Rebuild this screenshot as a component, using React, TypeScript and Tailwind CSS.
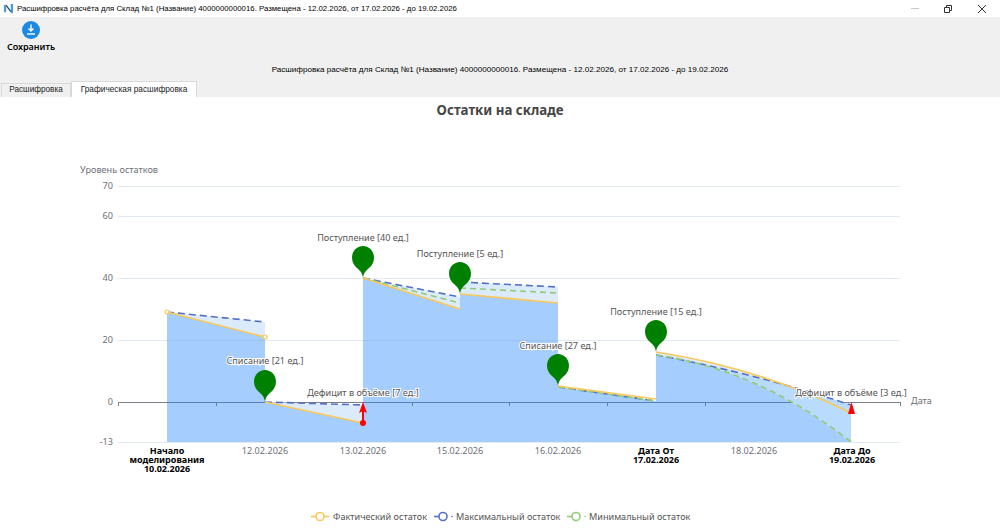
import React from 'react';

const TITLE = 'Расшифровка расчёта для Склад №1 (Название) 4000000000016. Размещена - 12.02.2026, от 17.02.2026 - до 19.02.2026';

const ORANGE = '#fac858';
const BLUE = '#5470c6';
const GREEN = '#91cc75';
const LIGHT = '#dcebfc';

const gridLines = [
  { y: 186, label: '70' },
  { y: 216, label: '60' },
  { y: 278, label: '40' },
  { y: 340, label: '20' },
  { y: 402, label: '0' },
  { y: 442, label: '-13' }
];

const ticks = [118, 216, 314, 412, 509, 607, 705, 803, 900];

const plainDates = [
  { x: 265, label: '12.02.2026' },
  { x: 363, label: '13.02.2026' },
  { x: 460, label: '15.02.2026' },
  { x: 558, label: '16.02.2026' },
  { x: 754, label: '18.02.2026' }
];

const boldDates = [
  { x: 167, lines: ['Начало', 'моделирования', '10.02.2026'] },
  { x: 656, lines: ['Дата От', '17.02.2026'] },
  { x: 852, lines: ['Дата До', '19.02.2026'] }
];

const darkAreas = [
  'M167,312 L265,337 L265,442 L167,442 Z',
  'M265,402 L363,423 L363,442 L265,442 Z',
  'M363,278 L460,309 L460,442 L363,442 Z',
  'M460,294 L558,303 L558,442 L460,442 Z',
  'M558,387 L656,401 L656,442 L558,442 Z',
  'M656,355 Q760,370 851,442 L656,442 Z'
];

const lightAreas = [
  'M167,312 L265,322 L265,337 Z',
  'M265,402 L363,405 L363,423 Z',
  'M363,278 L460,297 L460,309 Z',
  'M460,282 L558,287 L558,303 L460,294 Z',
  'M656,352 Q760,368 851,413 L851,405 Q750,372 656,355 Z'
];

const lines = [
  { color: BLUE, dash: '7 4', d: 'M167,312 L265,322 M265,402 L363,405 M363,278 L460,297 M460,282 L558,287 M558,387 L656,401 M656,355 Q750,372 851,405' },
  { color: GREEN, dash: '6 4', d: 'M363,278 L460,303 M460,288 L558,293 M558,387 L656,401 M656,355 Q760,370 851,442' },
  { color: ORANGE, dash: undefined, d: 'M167,312 L265,337 M265,402 L363,423 M363,278 L460,309 M460,294 L558,303 M558,386 L656,399 M656,352 Q760,368 851,413' }
];

const pins = [
  { x: 265, y: 402 },
  { x: 363, y: 278 },
  { x: 460, y: 294 },
  { x: 558, y: 386 },
  { x: 656, y: 352 }
];

const pinLabels = [
  { x: 363, y: 241, label: 'Поступление [40 ед.]' },
  { x: 460, y: 257, label: 'Поступление [5 ед.]' },
  { x: 265, y: 364, label: 'Списание [21 ед.]' },
  { x: 558, y: 349, label: 'Списание [27 ед.]' },
  { x: 656, y: 315, label: 'Поступление [15 ед.]' },
  { x: 363, y: 396, label: 'Дефицит в объёме [7 ед.]' },
  { x: 851, y: 396, label: 'Дефицит в объёме [3 ед.]' }
];

const legend = [
  { x: 320, color: ORANGE, textX: 333, label: 'Фактический остаток', solid: true },
  { x: 443, color: BLUE, textX: 456, label: 'Максимальный остаток', solid: false },
  { x: 576, color: GREEN, textX: 589, label: 'Минимальный остаток', solid: false }
];

const Pin = ({ x, y }: { x: number; y: number }) => (
  <path
    transform={`translate(${x} ${y})`}
    fill="#008000"
    d="M0,0 C-0.6,-5 -3,-7.5 -6,-10 C-9,-12.5 -11,-16 -11,-20.5 C-11,-27 -6,-32 0,-32 C6,-32 11,-27 11,-20.5 C11,-16 9,-12.5 6,-10 C3,-7.5 0.6,-5 0,0 Z"
  />
);

const Chart = () => (
  <svg viewBox="0 97 1000 435" className="block h-[435px] w-[1000px]">
    <text x="500" y="115" textAnchor="middle" className="fill-[#464646] text-[13.3px] font-bold">Остатки на складе</text>
    <text x="80" y="173" className="fill-[#6e7079] text-[9.1px]">Уровень остатков</text>

    {gridLines.map(g => (
      <text key={g.label} x="113" y={g.y + 3} textAnchor="end" className="fill-[#6e7079] text-[9.1px]">{g.label}</text>
    ))}

    {/* axis goes under the areas so it picks up their tint */}
    <line x1="118" x2="900" y1="402.5" y2="402.5" stroke="#7d8088" />
    {ticks.map(x => (
      <line key={x} x1={x + 0.5} x2={x + 0.5} y1="402" y2="406" stroke="#7d8088" />
    ))}

    {darkAreas.map(d => (
      <path key={d} d={d} fill="#1e82fa" fillOpacity="0.4" />
    ))}
    {lightAreas.map(d => (
      <path key={d} d={d} fill={LIGHT} />
    ))}
    <path d="M656,355 Q750,372 851,405 L851,442 Q760,370 656,355 Z" fill="#b9dbfd" />

    {gridLines.filter(g => g.label !== '0').map(g => (
      <line key={g.y} x1="118" x2="900" y1={g.y + 0.5} y2={g.y + 0.5} stroke="#6e8fc8" strokeOpacity="0.2" />
    ))}

    {lines.map(l => (
      <path key={l.color} d={l.d} fill="none" stroke={l.color} strokeWidth="1.6" strokeDasharray={l.dash} />
    ))}
    <circle cx="167" cy="312" r="2" fill="#fff" stroke={ORANGE} strokeWidth="1.2" />
    <circle cx="265" cy="337" r="2" fill="#fff" stroke={ORANGE} strokeWidth="1.2" />

    {pins.map(p => (
      <Pin key={p.x} x={p.x} y={p.y} />
    ))}

    {/* deficit arrows */}
    <line x1="363" x2="363" y1="423" y2="408" stroke="#f00" strokeWidth="2" />
    <path d="M363,402 L367,413 L363,411 L359,413 Z" fill="#f00" />
    <circle cx="363" cy="423" r="3" fill="#f00" />
    <path d="M851.5,402 L855,414 L848,414 Z" fill="#f00" />

    {pinLabels.map(l => (
      <text
        key={l.label}
        x={l.x}
        y={l.y}
        textAnchor="middle"
        stroke="#fff"
        strokeWidth="2"
        paintOrder="stroke"
        className="fill-[#555] text-[9.1px]"
      >
        {l.label}
      </text>
    ))}

    {plainDates.map(d => (
      <text key={d.x} x={d.x} y="454" textAnchor="middle" className="fill-[#6e7079] text-[9.1px]">{d.label}</text>
    ))}
    {boldDates.map(d => (
      <text key={d.x} textAnchor="middle" className="fill-black text-[9px] font-bold">
        {d.lines.map((t, i) => (
          <tspan key={t} x={d.x} y={454 + i * 9}>{t}</tspan>
        ))}
      </text>
    ))}
    <text x="911" y="404" className="fill-[#6e7079] text-[9.1px]">Дата</text>

    {legend.map(l => (
      <g key={l.label}>
        <line x1={l.x - 9} x2={l.solid ? l.x + 9 : l.x} y1="516.5" y2="516.5" stroke={l.color} strokeWidth="1.6" />
        {!l.solid && <circle cx={l.x + 9} cy="516.5" r="0.8" fill={l.color} />}
        <circle cx={l.x} cy="516.5" r="4" fill="#fff" stroke={l.color} strokeWidth="1.6" />
        <text x={l.textX} y="520" className="fill-[#555] text-[9.1px]">{l.label}</text>
      </g>
    ))}
  </svg>
);

const TitleBar = () => (
  <div className="flex h-[17px] items-center bg-white pl-[3px]">
    <svg viewBox="0 0 12 12" className="h-[11px] w-[11px]">
      <path d="M1 2h2.5v8H1z" fill="#4a9bd8" />
      <path d="M8.5 1h2.5v10H8.5z" fill="#4a9bd8" />
      <path d="M3.5 2.5l5 7" stroke="#27496f" strokeWidth="1.4" fill="none" />
    </svg>
    <span className="ml-[3px] whitespace-nowrap font-['Liberation_Sans',sans-serif] text-[7.8px] text-black">{TITLE}</span>
    <div className="ml-auto flex items-center">
      <svg viewBox="0 0 8 8" className="mr-[25px] h-[8px] w-[8px]">
        <path d="M0 3.5h8" stroke="#c8c8c8" />
      </svg>
      <svg viewBox="0 0 8 8" className="mr-[26px] h-[8px] w-[8px]">
        <path d="M0.5 2.5h5v5h-5z M2.5 2.5v-2h5v5h-2" fill="none" stroke="#333" />
      </svg>
      <svg viewBox="0 0 8 8" className="mr-[14px] h-[8px] w-[8px]">
        <path d="M0 0l8 8M8 0l-8 8" stroke="#333" />
      </svg>
    </div>
  </div>
);

const Toolbar = () => (
  <div className="flex h-[80px] flex-col bg-[#f0f0f0]">
    <div className="flex h-[45px] flex-col items-start pl-[7px] pt-[4px]">
      <div className="flex w-[48px] flex-col items-center">
        <svg viewBox="0 0 18 18" className="h-[18px] w-[18px]">
          <circle cx="9" cy="9" r="9" fill="#1e88e5" />
          <path d="M9 3.5v6M6.5 7.5L9 10l2.5-2.5" fill="none" stroke="#fff" strokeWidth="1.4" />
          <path d="M5 13h8" stroke="#fff" strokeWidth="1.4" />
        </svg>
        <span className="mt-[1px] whitespace-nowrap text-[9px] font-semibold leading-[14px] text-black">Сохранить</span>
      </div>
    </div>
    <div className="flex h-[17px] items-center justify-center whitespace-nowrap font-['Liberation_Sans',sans-serif] text-[8.1px] text-black">{TITLE}</div>
    <div className="mt-auto flex h-[16px] items-end pl-px font-['Liberation_Sans',sans-serif]">
      <div className="flex h-[14px] w-[70px] items-center justify-center whitespace-nowrap border border-b-0 border-[#d9d9d9] text-[8.2px] text-[#222]">Расшифровка</div>
      <div className="flex h-[16px] w-[126px] items-center justify-center whitespace-nowrap border border-b-0 border-[#d9d9d9] bg-white text-[8.3px] text-[#222]">Графическая расшифровка</div>
    </div>
  </div>
);

export default function App() {
  return (
    <div className="flex h-[532px] w-[1000px] flex-col overflow-hidden bg-white font-['Noto_Sans',sans-serif]">
      <TitleBar />
      <Toolbar />
      <Chart />
    </div>
  );
}
